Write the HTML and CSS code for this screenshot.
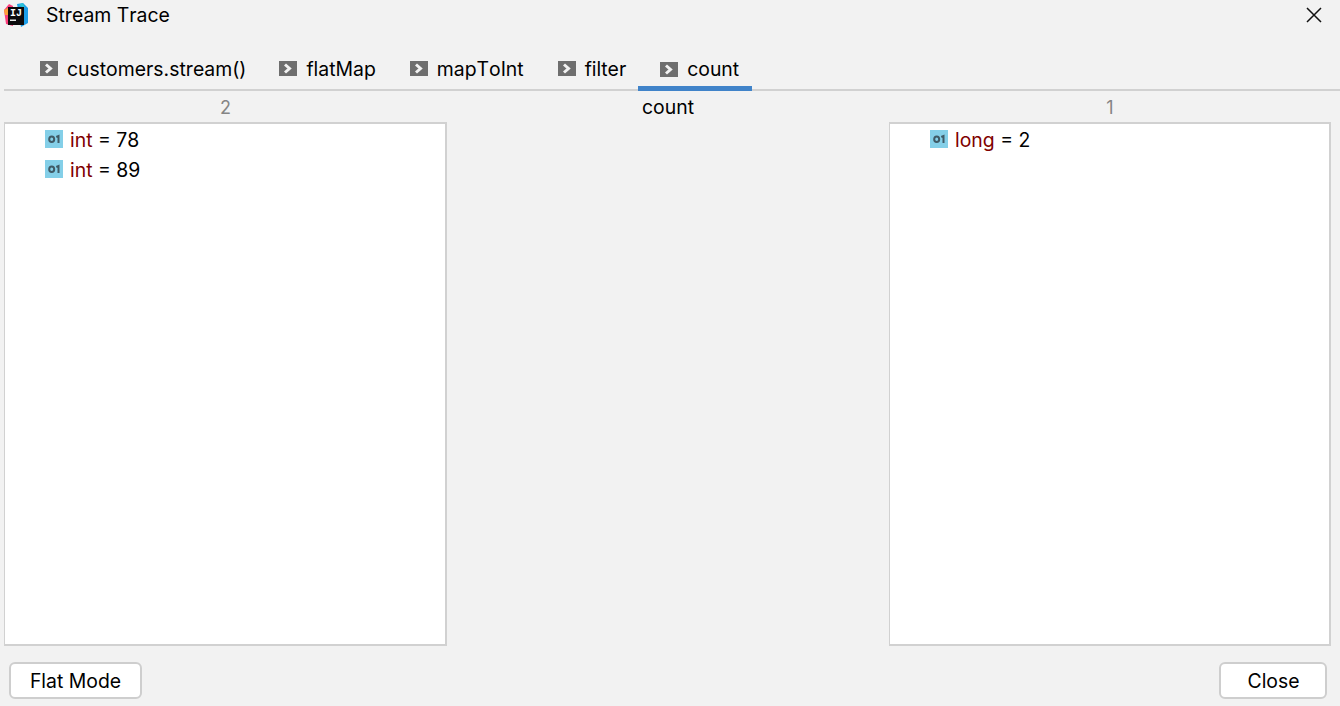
FILE: index.html
```html
<!DOCTYPE html>
<html lang="en">
<head>
<meta charset="utf-8">
<title>Stream Trace</title>
<link rel="stylesheet" href="styles.css">
</head>
<body>
<svg width="0" height="0" class="defs">
  <symbol id="chev" viewBox="0 0 18 15">
    <rect width="18" height="15" fill="#6e6e6e"/>
    <path d="M6 3.500 L10.500 7.500 L6 11.500" fill="none" stroke="#f2f2f2" stroke-width="3"/>
  </symbol>
  <symbol id="val" viewBox="0 0 18 18">
    <rect width="18" height="18" fill="#84cfe8"/>
    <ellipse cx="6.700" cy="9.300" rx="2.500" ry="2.800" fill="none" stroke="#3f5a66" stroke-width="2"/>
    <path d="M11.300 7 L13.500 6 V13" fill="none" stroke="#3f5a66" stroke-width="2"/>
  </symbol>
</svg>
<div class="dialog">
  <header class="titlebar">
    <svg class="logo" width="26" height="26" viewBox="0 0 26 26">
      <path d="M14 2 L20 1 L25 6 L25 21 L18 25 Z" fill="#1e9ee8"/>
      <path d="M15 3 L20 1 L22 6 Z" fill="#2dc4d6"/>
      <path d="M1 8 L6 2 L10 4 L10 24 L3 22 Z" fill="#fb3f7c"/>
      <path d="M1 8 L5 6 L6 13 L2 13 Z" fill="#fca13a"/>
      <rect x="5" y="5" width="16" height="18" fill="#0c0a0c"/>
      <text x="7" y="14" class="logo-text">IJ</text>
      <rect x="7" y="17.500" width="6" height="1.500" fill="#e8e8e8"/>
    </svg>
    <h1 class="title">Stream Trace</h1>
    <svg class="close-x" width="16" height="16" viewBox="0 0 16 16">
      <path d="M1 1 L15 15 M15 1 L1 15" stroke="#111" stroke-width="1.500" fill="none"/>
    </svg>
  </header>
  <nav class="tabs">
    <div class="tab tab-first"><svg class="tab-icon"><use href="#chev"/></svg>customers.stream()</div>
    <div class="tab"><svg class="tab-icon"><use href="#chev"/></svg>flatMap</div>
    <div class="tab"><svg class="tab-icon"><use href="#chev"/></svg>mapToInt</div>
    <div class="tab"><svg class="tab-icon"><use href="#chev"/></svg>filter</div>
    <div class="tab tab-active"><svg class="tab-icon"><use href="#chev"/></svg>count</div>
  </nav>
  <main class="columns">
    <section class="col col-left">
      <div class="col-head muted">2</div>
      <div class="list">
        <div class="row"><svg class="val-icon"><use href="#val"/></svg><span><span class="kw">int</span> = 78</span></div>
        <div class="row"><svg class="val-icon"><use href="#val"/></svg><span><span class="kw">int</span> = 89</span></div>
      </div>
    </section>
    <section class="col">
      <div class="col-head col-head-mid">count</div>
    </section>
    <section class="col">
      <div class="col-head muted">1</div>
      <div class="list">
        <div class="row"><svg class="val-icon"><use href="#val"/></svg><span><span class="kw">long</span> = 2</span></div>
      </div>
    </section>
  </main>
  <footer class="footer">
    <button class="btn btn-flat">Flat Mode</button>
    <button class="btn btn-close">Close</button>
  </footer>
</div>
</body>
</html>
```
FILE: styles.css
```css
* { box-sizing: border-box; }
html, body { margin: 0; height: 100%; }
body {
  background: #f2f2f2;
  color: #000;
  font-family: Inter, "Liberation Sans", sans-serif;
  font-size: 19.4px;
  font-kerning: none;
  overflow: hidden;
}
.defs { position: absolute; }
.dialog { width: 1340px; height: 706px; display: flex; flex-direction: column; }
.titlebar { height: 30px; display: flex; align-items: center; padding: 0 18px 0 3px; flex: none; }
.logo { flex: none; }
.logo-text { font-family: "Liberation Mono", monospace; font-size: 10px; font-weight: 700; fill: #fff; }
.title { margin: 0 0 0 17px; font-size: 19.4px; font-weight: 400; flex: 1; }
.tabs {
  height: 61px; flex: none; margin: 0 0 0 4px; padding: 20px 0 0 15px;
  display: flex; border-bottom: 2px solid #d1d1d1;
}
.tab { display: flex; align-items: center; padding: 0 13px 4px 21px; height: 41px; white-space: nowrap; }
.tab-first { padding-right: 12px; }
.tab-icon { width: 18px; height: 15px; margin-right: 9px; flex: none; }
.tab-active { box-shadow: inset 0 -5px 0 #4083c9; margin: 0 0 -2px -1px; padding-left: 22px; padding-bottom: 3px; }
.columns { height: 555px; flex: none; display: flex; padding-left: 4px; }
.col { width: 442px; display: flex; flex-direction: column; flex: none; }
.col-left { width: 443px; }
.col-head { height: 31px; flex: none; display: flex; align-items: center; justify-content: center; padding-top: 2px; }
.col-head-mid { padding-top: 0; }
.muted { color: #858585; font-size: 18px; }
.list { height: 524px; flex: none; background: #fff; border: 2px solid #d1d1d1; border-width: 2px 2px 2px 1px; padding: 1px 0 0 40px; }
.row { height: 30px; display: flex; align-items: center; }
.val-icon { width: 18px; height: 18px; margin-right: 7px; margin-top: -2px; flex: none; }
.kw { color: #7f0000; }
.footer { flex: 1; display: flex; justify-content: space-between; padding: 16px 13px 0 9px; align-items: flex-start; }
.btn {
  height: 37px; background: #fff; border: 2px solid #cecece; border-radius: 6px;
  font: inherit; color: #000; padding: 0;
}
.btn-flat { width: 133px; }
.btn-close { width: 108px; padding-left: 1px; }
```
